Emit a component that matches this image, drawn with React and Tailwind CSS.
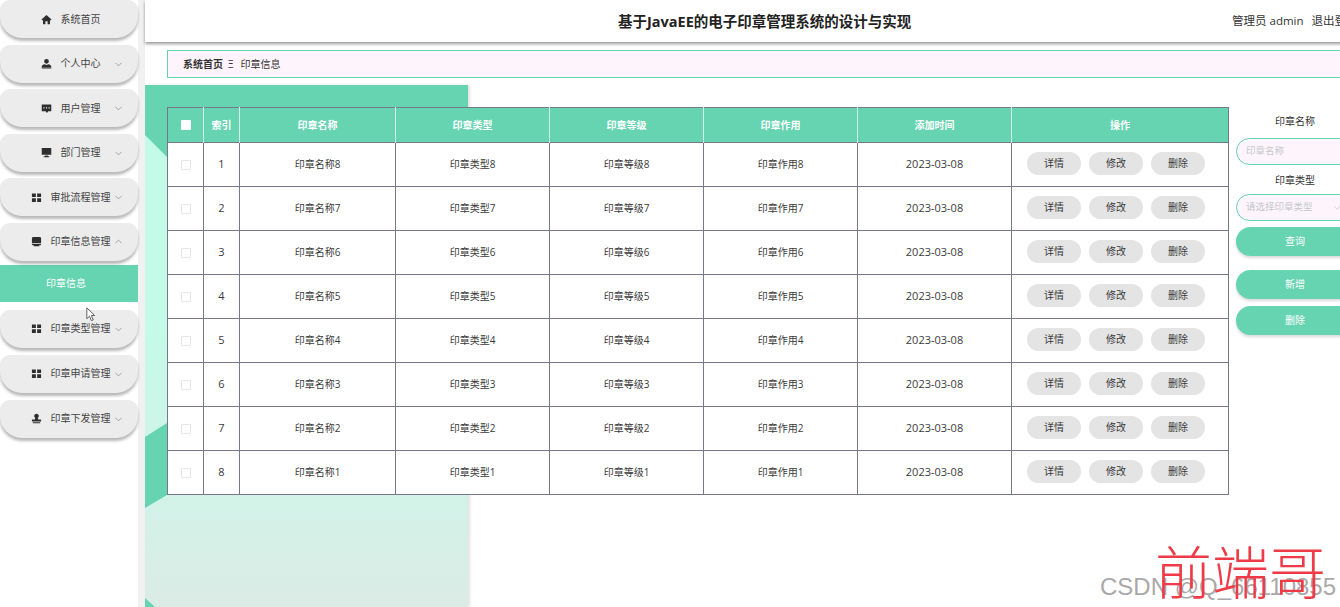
import React from 'react';
import { ChevronDown, ChevronUp } from 'lucide-react';

const fontStack = { fontFamily: '"Open Sans", "Noto Sans CJK SC", sans-serif' };

const icons = {
  home: <path d="M6 1 .8 5.800V6.800H2.200V11.200H4.800V7.800H7.200V11.200H9.800V6.800H11.200V5.800Z" />,
  user: <path d="M6 1a2.600 2.600 0 1 1 0 5.200A2.600 2.600 0 0 1 6 1ZM.8 9.200c0-1.400 1.700-2.300 3.200-2.500l2 .8 2-.8c1.500.2 3.200 1.100 3.200 2.500V10H.8ZM.8 10.400h10.400v1H.8Z" />,
  chat: <path d="M.8 1.500h10.400v7.500H8L6.500 10.800 5 9H.8ZM2.600 4.600v1.300h1.300V4.600ZM5.400 4.600v1.300h1.300V4.600ZM8.200 4.600v1.300h1.300V4.600Z" fillRule="evenodd" />,
  monitor: <path d="M.8 1.200h10.400v7.300H.8ZM4.500 9.200h3V10H9v1.200H3V10h1.500Z" />,
  grid: <path d="M1 1.500h4.300v4H1ZM6.700 1.500H11v4H6.700ZM1 6.800h4.300v4H1ZM6.700 6.800H11v4H6.700Z" />,
  stamp: <path d="M2.500 1.200h7A1.500 1.500 0 0 1 11 2.700v4.800H1V2.700a1.500 1.500 0 0 1 1.500-1.500ZM1 8.400h10V9a1 1 0 0 1-1 1H9v1.200H3V10H2a1 1 0 0 1-1-1Z" />,
  person: <path d="M6 .8a2.500 2.500 0 0 1 1.400 4.600L7.800 7H11v2.400H1V7h3.200l.4-1.600A2.500 2.500 0 0 1 6 .8ZM2 10.200h8v1H2Z" />,
};

const navTop = [
  { label: '系统首页', icon: 'home' },
  { label: '个人中心', icon: 'user', arrow: 'down' },
  { label: '用户管理', icon: 'chat', arrow: 'down' },
  { label: '部门管理', icon: 'monitor', arrow: 'down' },
  { label: '审批流程管理', icon: 'grid', arrow: 'down' },
  { label: '印章信息管理', icon: 'stamp', arrow: 'up' },
];

const navBottom = [
  { label: '印章类型管理', icon: 'grid', arrow: 'down' },
  { label: '印章申请管理', icon: 'grid', arrow: 'down' },
  { label: '印章下发管理', icon: 'person', arrow: 'down' },
];

const rows = [8, 7, 6, 5, 4, 3, 2, 1];
const columns = ['印章名称', '印章类型', '印章等级', '印章作用'];

function NavItem({ label, icon, arrow }) {
  return (
    <div className="relative flex h-[38px] w-[138px] items-center justify-center gap-[9px] rounded-t-[10px] rounded-b-[22px] bg-[#ececec] pl-[3px] text-[10px] text-[#444] shadow-[0_3px_3px_rgba(0,0,0,0.28)]">
      <svg viewBox="0 0 12 12" className="h-[11px] w-[11px] fill-[#2e2e2e]">
        {icons[icon]}
      </svg>
      <span>{label}</span>
      {arrow === 'down' && <ChevronDown size={11} strokeWidth={1.4} className="absolute right-[14px] top-[14px] text-[#7a7a7a]" />}
      {arrow === 'up' && <ChevronUp size={11} strokeWidth={1.4} className="absolute right-[14px] top-[13px] text-[#7a7a7a]" />}
    </div>
  );
}

function Sidebar() {
  return (
    <aside className="relative flex h-[607px] w-[145px] shrink-0 flex-col bg-white shadow-[inset_-7px_0_0_#f1f1f1]">
      <div className="flex flex-col gap-[6.6px]">
        {navTop.map((item) => (
          <NavItem key={item.label} {...item} />
        ))}
      </div>
      <div className="mt-[4px] flex h-[37px] w-[138px] items-center justify-center bg-[#66d3b1] pr-[6px] text-[10px] text-white">
        印章信息
      </div>
      <div className="mt-[8px] flex flex-col gap-[7px]">
        {navBottom.map((item) => (
          <NavItem key={item.label} {...item} />
        ))}
      </div>
      {/* mouse pointer caught in the screenshot */}
      <svg viewBox="0 0 12 18" className="absolute left-[86px] top-[307px] h-[15px] w-[10px] fill-white stroke-[#444]">
        <path d="M1 1v13l3.200-3 2.300 5.400 2.200-1-2.300-5.200H10.500Z" />
      </svg>
    </aside>
  );
}

function RowButton({ children }) {
  return (
    <button className="h-[23px] w-[54px] rounded-full bg-[#e4e4e4] text-[10px] text-[#3a3a3a]">{children}</button>
  );
}

function StampTable() {
  return (
    <table className="w-[1061px] shrink-0 table-fixed border-collapse border border-[#77778a] text-center text-[10px] text-[#3a3a3a]">
      <colgroup>
        <col className="w-[36px]" />
        <col className="w-[36px]" />
        <col className="w-[156px]" />
        <col className="w-[154px]" />
        <col className="w-[154px]" />
        <col className="w-[154px]" />
        <col className="w-[154px]" />
        <col className="w-[217px]" />
      </colgroup>
      <thead>
        <tr className="h-[35px] bg-[#66d3b1] font-bold text-white">
          <th className="border-r border-[#d5f3ea]">
            <span className="mx-auto block h-[10px] w-[10px] rounded-[1px] bg-white" />
          </th>
          <th className="border-r border-[#d5f3ea]">索引</th>
          {columns.map((c) => (
            <th key={c} className="border-r border-[#d5f3ea]">{c}</th>
          ))}
          <th className="border-r border-[#d5f3ea]">添加时间</th>
          <th>操作</th>
        </tr>
      </thead>
      <tbody className="bg-white">
        {rows.map((n, i) => (
          <tr key={n} className="h-[44px]">
            <td className="border border-[#77778a]">
              <span className="mx-auto block h-[10px] w-[10px] rounded-[1px] border border-[#e6e6e6]" />
            </td>
            <td className="border border-[#77778a] text-[11px]">{i + 1}</td>
            {columns.map((c) => (
              <td key={c} className="border border-[#77778a]">{c}{n}</td>
            ))}
            <td className="border border-[#77778a] text-[11px]">2023-03-08</td>
            <td className="border border-[#77778a]">
              <div className="flex justify-start gap-[8px] pb-[2px] pl-[15px]">
                <RowButton>详情</RowButton>
                <RowButton>修改</RowButton>
                <RowButton>删除</RowButton>
              </div>
            </td>
          </tr>
        ))}
      </tbody>
    </table>
  );
}

function SearchForm() {
  const pill = 'flex h-[29px] w-full items-center justify-center rounded-full bg-[#66d3b1] text-[10px] text-white shadow-[0_2px_3px_rgba(0,0,0,0.15)]';
  const field = 'relative flex h-[27px] w-full items-center justify-start rounded-full border-[1.5px] border-[#66d3b1] bg-[#fdf5fb] pl-[9px] text-[9.5px] text-[#c6c6cc]';
  return (
    <div className="ml-[7px] flex w-[118px] shrink-0 flex-col text-center text-[10px] text-[#333]">
      <div className="mt-[7px] h-[14px] leading-[14px]">印章名称</div>
      <div className={`mt-[10px] ${field}`}>印章名称</div>
      <div className="mt-[8px] h-[14px] leading-[14px]">印章类型</div>
      <div className={`mt-[7px] ${field}`}>
        请选择印章类型
        <ChevronDown size={10} strokeWidth={1.2} className="absolute right-[11px] top-[8px] text-[#aaa]" />
      </div>
      <button className={`mt-[6px] ${pill}`}>查询</button>
      <button className={`mt-[14px] ${pill}`}>新增</button>
      <button className={`mt-[7px] ${pill}`}>删除</button>
    </div>
  );
}

export default function App() {
  return (
    <div className="relative flex h-[607px] w-[1340px] overflow-hidden bg-white" style={fontStack}>
      <Sidebar />
      <main className="relative w-[1240px] shrink-0">
        <header className="relative z-10 flex h-[42px] items-center bg-white pl-[473px] shadow-[0_2px_3px_rgba(0,0,0,0.4)]">
          <h1 className="w-[293px] whitespace-nowrap pt-[1px] text-center text-[14.5px] font-bold text-[#222]">基于JavaEE的电子印章管理系统的设计与实现</h1>
          <span className="ml-[321px] whitespace-nowrap text-[11.5px] text-[#333]">管理员 admin</span>
          <span className="ml-[8px] whitespace-nowrap text-[11.5px] text-[#333]">退出登录</span>
        </header>

        <div className="ml-[22px] mt-[8px] flex h-[28px] w-[1300px] items-center border border-[#66d3b1] bg-[#fdf5fb] pl-[15px] text-[10px] text-[#333]">
          <span className="font-bold">系统首页</span>
          <span className="ml-[5px]">Ξ</span>
          <span className="ml-[7px]">印章信息</span>
        </div>

        {/* teal decorated panel behind the table */}
        <div className="absolute left-0 top-[85px] h-[522px] w-[323px] bg-gradient-to-b from-[#c4fbe8] from-45% via-[#d2f2e8] via-80% to-[#dbebe6] shadow-[2px_0_3px_rgba(0,0,0,0.12)]">
          <svg viewBox="0 0 323 522" className="h-full w-full fill-[#66d3b1]">
            <polygon points="0,0 323,0 323,22 22,22 22,72 0,50" />
            <polygon points="0,352 22,338 22,410 0,423" />
            <polygon points="0,513 10,522 0,522" />
          </svg>
        </div>

        <div className="relative ml-[22px] mt-[29px] flex items-start">
          <StampTable />
          <SearchForm />
        </div>
      </main>

      {/* screenshot watermarks */}
      <div className="absolute left-[1100px] top-[569px] whitespace-nowrap text-[24px] text-[#a9a9a9]" style={{ fontFamily: '"Liberation Sans", sans-serif' }}>
        CSDN @Q_66110855
      </div>
      <div className="absolute left-[1155px] top-[531px] whitespace-nowrap text-[57px] font-light leading-[76px] text-[#ee3b47]" style={{ fontFamily: '"Noto Sans CJK SC", serif' }}>
        前端哥
      </div>
    </div>
  );
}
